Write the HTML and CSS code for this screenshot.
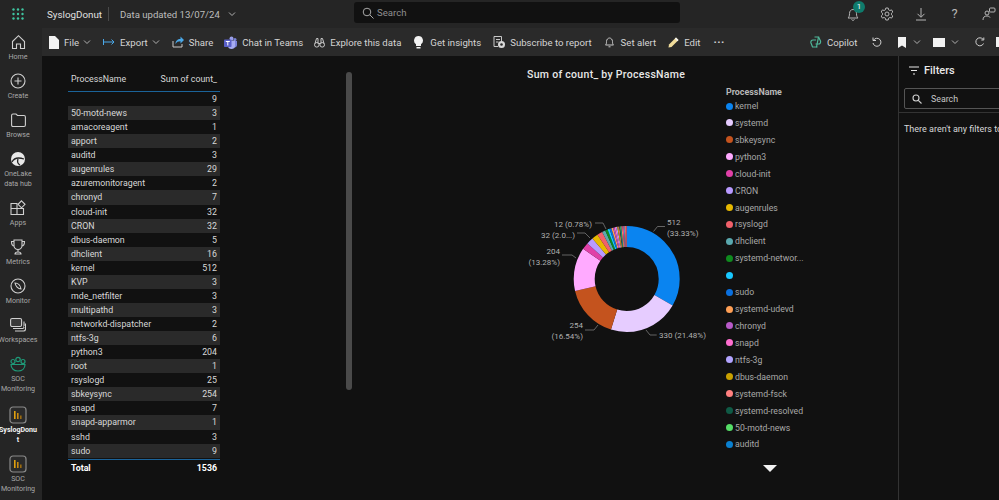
FILE: index.html
```html
<!DOCTYPE html>
<html lang="en">
<head>
<meta charset="utf-8">
<title>SyslogDonut</title>
<link rel="stylesheet" href="styles.css">
</head>
<body>
<svg class="defs" width="0" height="0" aria-hidden="true">
  <defs>
    <symbol id="chev" viewBox="0 0 10 10"><path d="M2 3.5 5 6.5 8 3.5" fill="none" stroke="currentColor" stroke-width="1"/></symbol>
    <symbol id="report" viewBox="0 0 18 18"><rect x="1" y="1" width="16" height="16" rx="3" fill="#2a2a2a" stroke="#8a8a8a" stroke-width="1.2"/><rect x="5" y="5" width="1.6" height="8" fill="#e0a010"/><rect x="8" y="7" width="1.6" height="6" fill="#c98a10"/><rect x="11" y="9.500" width="1.600" height="3.500" fill="#9a6a10"/></symbol>
  </defs>
</svg>
<header class="topbar">
  <div class="waffle"><svg width="12" height="12" viewBox="0 0 12 12" fill="#3fc4a0"><circle cx="1.500" cy="1.500" r="1.200"/><circle cx="6" cy="1.500" r="1.200"/><circle cx="10.500" cy="1.500" r="1.200"/><circle cx="1.500" cy="6" r="1.200"/><circle cx="6" cy="6" r="1.200"/><circle cx="10.500" cy="6" r="1.200"/><circle cx="1.500" cy="10.500" r="1.200"/><circle cx="6" cy="10.500" r="1.200"/><circle cx="10.500" cy="10.500" r="1.200"/></svg></div>
  <span class="brand">SyslogDonut</span>
  <span class="brand-sep"></span>
  <span class="updated">Data updated 13/07/24</span>
  <svg class="chev-top" width="10" height="10"><use href="#chev"/></svg>
  <div class="search">
    <svg width="12" height="12" viewBox="0 0 12 12" fill="none" stroke="#a8a8a8" stroke-width="1"><circle cx="5" cy="5" r="3.800"/><path d="M7.800 7.800 11.500 11.500"/></svg>
    <span>Search</span>
  </div>
  <div class="top-icons">
    <div class="top-icon bell-wrap">
      <svg width="14" height="15" viewBox="0 0 14 15" fill="none" stroke="#b5b5b5" stroke-width="1"><path d="M2 11c1-1 1.500-2 1.500-4.500C3.500 4 5 2.500 7 2.500S10.500 4 10.500 6.500c0 2.500.5 3.500 1.500 4.500Z"/><path d="M5.500 12.500c.5 1 2.500 1 3 0"/></svg>
      <span class="badge">1</span>
    </div>
    <div class="top-icon"><svg width="14" height="14" viewBox="0 0 14 14" fill="none" stroke="#b5b5b5" stroke-width="1"><circle cx="7" cy="7" r="2"/><path d="M5.800 1h2.400l.4 1.800 1.300.7 1.700-.6 1.200 2.100-1.300 1.200v1.600l1.300 1.200-1.200 2.100-1.700-.6-1.300.7L8.200 13H5.800l-.4-1.800-1.300-.7-1.700.6L1.200 9l1.300-1.200V6.200L1.200 5l1.200-2.100 1.700.6 1.300-.7Z"/></svg></div>
    <div class="top-icon"><svg width="12" height="14" viewBox="0 0 12 14" fill="none" stroke="#b5b5b5" stroke-width="1"><path d="M6 1v9M2.500 6.800 6 10.300l3.500-3.500M1 13h10"/></svg></div>
    <div class="top-icon help">?</div>
    <div class="top-icon"><svg width="14" height="14" viewBox="0 0 14 14" fill="none" stroke="#b5b5b5" stroke-width="1"><circle cx="5" cy="6" r="2"/><path d="M1 13c0-3 1.500-4 4-4 1.500 0 2.500.5 3 1.500"/><rect x="7.500" y="1" width="5.500" height="4" rx="1"/></svg></div>
  </div>
</header>
<nav class="toolbar">
  <div class="tool-group">
    <span class="tool tool-file"><svg width="10" height="13" viewBox="0 0 10 13" fill="#f2f2f2"><path d="M0 0h6l4 4v9H0Z"/></svg>File<svg class="tchev" width="10" height="10"><use href="#chev"/></svg></span>
    <span class="tool tool-export"><svg width="12" height="8" viewBox="0 0 12 8" fill="none" stroke="#4aa8e8" stroke-width="1"><path d="M.5 1v6M1 4h10M8.500 1.500 11 4 8.500 6.500"/></svg>Export<svg class="tchev" width="10" height="10"><use href="#chev"/></svg></span>
    <span class="tool tool-share"><svg width="12" height="12" viewBox="0 0 12 12"><path d="M1 5v6h9V8" fill="none" stroke="#c8c8c8"/><path d="M3.500 8c0-3 2-5 5-5V.5L12 4 8.500 7.500V5.300C6 5.300 4.800 6 3.500 8Z" fill="#4aa8e8"/></svg>Share</span>
    <span class="tool tool-teams"><svg width="13" height="13" viewBox="0 0 13 13"><circle cx="7.500" cy="2.500" r="2" fill="#9a9ee8"/><circle cx="11" cy="3.500" r="1.500" fill="#7b83d8"/><path d="M9 5h4v4c0 1.500-1 2.500-2.500 2.500H9Z" fill="#7b83d8"/><path d="M4 4.500h7V10c0 2-1.500 3-3.500 3S4 12 4 10Z" fill="#a6abf0"/><rect x="0" y="3.500" width="7.500" height="7.500" rx=".8" fill="#5a60c8"/><path d="M1.800 5.500h4M3.800 5.500v4" stroke="#fff" stroke-width="1"/></svg>Chat in Teams</span>
    <span class="tool tool-explore"><svg width="11" height="11" viewBox="0 0 11 11" fill="none" stroke="#c8c8c8" stroke-width="1"><circle cx="2.800" cy="7.800" r="2.300"/><circle cx="8.200" cy="7.800" r="2.300"/><path d="M1 6.500 2.500 1.500h1.500v5M10 6.500 8.500 1.500H7v5M4.500 6.500h2"/></svg>Explore this data</span>
    <span class="tool tool-insights"><svg width="9" height="13" viewBox="0 0 9 13" fill="#f2f2f2"><path d="M4.500 0a4.500 4.500 0 0 1 2.500 8.200V10H2V8.200A4.500 4.500 0 0 1 4.500 0Z"/><rect x="2.500" y="11" width="4" height="1.500"/></svg>Get insights</span>
    <span class="tool tool-sub"><svg width="12" height="12" viewBox="0 0 12 12"><path d="M1 .5h7.500v5M1 .5v10h4M3 3.500h4M3 6h2.500" fill="none" stroke="#c8c8c8"/><circle cx="8.500" cy="8.500" r="3.500" fill="#d8d8d8"/><circle cx="8.500" cy="8.500" r="1.300" fill="#2a2a2a"/></svg>Subscribe to report</span>
    <span class="tool tool-alert"><svg width="9" height="11" viewBox="0 0 9 11" fill="none" stroke="#c8c8c8"><path d="M.5 8c.8-.8 1-1.500 1-3.500C1.500 2.500 3 1 4.500 1s3 1.500 3 3.500c0 2 .2 2.700 1 3.500ZM3.500 9.800h2"/></svg>Set alert</span>
    <span class="tool tool-edit"><svg width="11" height="11" viewBox="0 0 11 11"><path d="M8 .5 10.500 3 3.500 10 .5 10.500 1 7.500Z" fill="#f0dc9a"/><path d="M8 .5 10.500 3 9.300 4.200 6.800 1.700Z" fill="#f2f2f2"/></svg>Edit</span>
    <span class="tool tool-more">···</span>
  </div>
  <div class="tool-group tool-right">
    <span class="tool tool-copilot"><svg width="12" height="12" viewBox="0 0 12 12" fill="none" stroke="#4fb79a" stroke-width="1.200"><path d="M4.500 1h4l-2 10h-4l-1.500-4c-.5-1.500.5-3 2-3h3"/><path d="M7.500 11h-1M8.500 1l2 4c.5 1.500-.5 3-2 3h-3"/></svg>Copilot</span>
    <span class="tool tool-undo"><svg width="10" height="10" viewBox="0 0 10 10" fill="none" stroke="#d0d0d0"><path d="M1.500 3.200A4 4 0 1 1 1 6"/><path d="M1 .5v3h3"/></svg></span>
    <span class="tool tool-mark"><svg width="8" height="11" viewBox="0 0 8 11" fill="#f2f2f2"><path d="M0 0h8v11L4 8.500 0 11Z"/></svg><svg class="tchev" width="10" height="10"><use href="#chev"/></svg></span>
    <span class="tool tool-view"><span class="view-rect"></span><svg class="tchev" width="10" height="10"><use href="#chev"/></svg></span>
    <span class="tool-sep"></span>
    <span class="tool tool-refresh"><svg width="10" height="10" viewBox="0 0 10 10" fill="none" stroke="#d0d0d0"><path d="M8.500 6.500A4 4 0 1 1 8 2.300"/><path d="M8.800.5v2.500H6.300"/></svg></span>
    <span class="tool tool-last"><span class="last-rect"></span></span>
  </div>
</nav>
<div class="body-row">
  <aside class="sidebar">
    <a class="side-item"><svg class="side-ic" width="15" height="15" viewBox="0 0 15 15" fill="none" stroke="#d0d0d0" stroke-width="1.100"><path d="M1.500 7 7.500 1.200 13.500 7v7H9.500V9.500h-4V14H1.500Z"/></svg><span>Home</span></a>
    <a class="side-item"><svg class="side-ic" width="16" height="16" viewBox="0 0 16 16" fill="none" stroke="#d0d0d0" stroke-width="1.100"><circle cx="8" cy="8" r="7"/><path d="M8 4.500v7M4.500 8h7"/></svg><span>Create</span></a>
    <a class="side-item"><svg class="side-ic" width="15" height="14" viewBox="0 0 15 14" fill="none" stroke="#d0d0d0" stroke-width="1.100"><path d="M.6 2.500C.6 1.500 1 1 2 1h3l1.500 1.500H13c1 0 1.400.5 1.400 1.500v8c0 1-.4 1.500-1.400 1.500H2c-1 0-1.400-.5-1.400-1.500Z"/></svg><span>Browse</span></a>
    <a class="side-item side-two"><svg class="side-ic" width="16" height="16" viewBox="0 0 16 16"><circle cx="8" cy="8" r="7" fill="#e8e8e8"/><path d="M2 11c2-4 6-5 12-3M8 8c-1 3 0 5 2 6" fill="none" stroke="#242424" stroke-width="1.300"/></svg><span>OneLake<br>data hub</span></a>
    <a class="side-item"><svg class="side-ic" width="16" height="16" viewBox="0 0 16 16" fill="none" stroke="#d0d0d0" stroke-width="1.100"><path d="M1 3.500h6v11H1ZM7 8.500h6.500v6H7ZM1 8.500h6"/><path d="M11.500 .8 15 4.300 11.500 7.800 8 4.300Z"/></svg><span>Apps</span></a>
    <a class="side-item"><svg class="side-ic" width="16" height="16" viewBox="0 0 16 16" fill="none" stroke="#d0d0d0" stroke-width="1.100"><path d="M4 1h8v5.500a4 4 0 0 1-8 0ZM4 2.500H1.500c0 3 1 4.500 3 5M12 2.500h2.500c0 3-1 4.500-3 5M8 10.500V13M5 15c0-1.500 1-2 3-2s3 .5 3 2Z"/></svg><span>Metrics</span></a>
    <a class="side-item"><svg class="side-ic" width="16" height="16" viewBox="0 0 16 16" fill="none" stroke="#d0d0d0" stroke-width="1.100"><circle cx="8" cy="8" r="7"/><path d="M5 5c3 0 5.500 2.500 6 6C8 11 5.500 8 5 5Z"/></svg><span>Monitor</span></a>
    <a class="side-item"><svg class="side-ic" width="16" height="15" viewBox="0 0 16 15" fill="none" stroke="#d0d0d0" stroke-width="1.100"><rect x=".6" y="1" width="11" height="8" rx="1.500" fill="#3a3a3a"/><path d="M3 11h9.500c1 0 1.500-.5 1.500-1.500V4M5 13.500h8.500c1 0 2-1 2-2V6"/></svg><span>Workspaces</span></a>
    <a class="side-item side-two side-soc"><svg class="side-ic" width="16" height="16" viewBox="0 0 16 16" fill="none" stroke="#1f9a78" stroke-width="1.200"><circle cx="8" cy="3.500" r="2.200"/><circle cx="3" cy="5.500" r="2"/><circle cx="13" cy="5.500" r="2"/><path d="M1 8.500h14c0 4-3 6.500-7 6.500S1 12.500 1 8.500Z"/></svg><span>SOC<br>Monitoring</span></a>
    <a class="side-item side-two side-report side-active"><svg class="side-ic" width="18" height="18"><use href="#report"/></svg><span>SyslogDonu<br>t</span></a>
    <a class="side-item side-two side-report"><svg class="side-ic" width="18" height="18"><use href="#report"/></svg><span>SOC<br>Monitoring</span></a>
  </aside>
  <main class="canvas">
    <section class="matrix">
      <div class="m-head"><span>ProcessName</span><span>Sum of count_</span></div>
      <div class="m-rows">
        <div class="m-row"><span></span><span>9</span></div>
        <div class="m-row"><span>50-motd-news</span><span>3</span></div>
        <div class="m-row"><span>amacoreagent</span><span>1</span></div>
        <div class="m-row"><span>apport</span><span>2</span></div>
        <div class="m-row"><span>auditd</span><span>3</span></div>
        <div class="m-row"><span>augenrules</span><span>29</span></div>
        <div class="m-row"><span>azuremonitoragent</span><span>2</span></div>
        <div class="m-row"><span>chronyd</span><span>7</span></div>
        <div class="m-row"><span>cloud-init</span><span>32</span></div>
        <div class="m-row"><span>CRON</span><span>32</span></div>
        <div class="m-row"><span>dbus-daemon</span><span>5</span></div>
        <div class="m-row"><span>dhclient</span><span>16</span></div>
        <div class="m-row"><span>kernel</span><span>512</span></div>
        <div class="m-row"><span>KVP</span><span>3</span></div>
        <div class="m-row"><span>mde_netfilter</span><span>3</span></div>
        <div class="m-row"><span>multipathd</span><span>3</span></div>
        <div class="m-row"><span>networkd-dispatcher</span><span>2</span></div>
        <div class="m-row"><span>ntfs-3g</span><span>6</span></div>
        <div class="m-row"><span>python3</span><span>204</span></div>
        <div class="m-row"><span>root</span><span>1</span></div>
        <div class="m-row"><span>rsyslogd</span><span>25</span></div>
        <div class="m-row"><span>sbkeysync</span><span>254</span></div>
        <div class="m-row"><span>snapd</span><span>7</span></div>
        <div class="m-row"><span>snapd-apparmor</span><span>1</span></div>
        <div class="m-row"><span>sshd</span><span>3</span></div>
        <div class="m-row"><span>sudo</span><span>9</span></div>
      </div>
      <div class="m-total"><span>Total</span><span>1536</span></div>
    </section>
    <div class="scrollbar"></div>
    <section class="chart">
      <h2 class="chart-title">Sum of count_ by ProcessName</h2>
      <svg class="donut" width="363" height="340" viewBox="352 82 363 340">
        <g class="slices" fill="none" stroke-width="21">
          <circle pathLength="1536" stroke="#0a84f0" stroke-dasharray="512 1024" stroke-dashoffset="0"/>
          <circle pathLength="1536" stroke="#e6ccff" stroke-dasharray="330 1206" stroke-dashoffset="-512"/>
          <circle pathLength="1536" stroke="#c4531e" stroke-dasharray="254 1282" stroke-dashoffset="-842"/>
          <circle pathLength="1536" stroke="#ffaaff" stroke-dasharray="204 1332" stroke-dashoffset="-1096"/>
          <circle pathLength="1536" stroke="#e040a8" stroke-dasharray="32 1504" stroke-dashoffset="-1300"/>
          <circle pathLength="1536" stroke="#b99aff" stroke-dasharray="32 1504" stroke-dashoffset="-1332"/>
          <circle pathLength="1536" stroke="#e6b800" stroke-dasharray="29 1507" stroke-dashoffset="-1364"/>
          <circle pathLength="1536" stroke="#f0606a" stroke-dasharray="25 1511" stroke-dashoffset="-1393"/>
          <circle pathLength="1536" stroke="#5aa8ae" stroke-dasharray="16 1520" stroke-dashoffset="-1418"/>
          <circle pathLength="1536" stroke="#0f8a1e" stroke-dasharray="12 1524" stroke-dashoffset="-1434"/>
          <circle pathLength="1536" stroke="#18c8ff" stroke-dasharray="9 1527" stroke-dashoffset="-1446"/>
          <circle pathLength="1536" stroke="#0a70e0" stroke-dasharray="9 1527" stroke-dashoffset="-1455"/>
          <circle pathLength="1536" stroke="#ff9f55" stroke-dasharray="8 1528" stroke-dashoffset="-1464"/>
          <circle pathLength="1536" stroke="#b85ac8" stroke-dasharray="7 1529" stroke-dashoffset="-1472"/>
          <circle pathLength="1536" stroke="#ff6ed0" stroke-dasharray="7 1529" stroke-dashoffset="-1479"/>
          <circle pathLength="1536" stroke="#b3a4ff" stroke-dasharray="6 1530" stroke-dashoffset="-1486"/>
          <circle pathLength="1536" stroke="#c9a000" stroke-dasharray="5 1531" stroke-dashoffset="-1492"/>
          <circle pathLength="1536" stroke="#ff8080" stroke-dasharray="4 1532" stroke-dashoffset="-1497"/>
          <circle pathLength="1536" stroke="#0f5a45" stroke-dasharray="4 1532" stroke-dashoffset="-1501"/>
          <circle pathLength="1536" stroke="#55dd66" stroke-dasharray="3 1533" stroke-dashoffset="-1505"/>
          <circle pathLength="1536" stroke="#0a80d0" stroke-dasharray="3 1533" stroke-dashoffset="-1508"/>
          <circle pathLength="1536" stroke="#ff9f55" stroke-dasharray="5 1531" stroke-dashoffset="-1511"/>
          <circle pathLength="1536" stroke="#e040a8" stroke-dasharray="6 1530" stroke-dashoffset="-1516"/>
          <circle pathLength="1536" stroke="#5aa8ae" stroke-dasharray="5 1531" stroke-dashoffset="-1522"/>
          <circle pathLength="1536" stroke="#f0606a" stroke-dasharray="9 1527" stroke-dashoffset="-1527"/>
        </g>
        <g class="leaders" fill="none" stroke="#7a7a7a" stroke-width=".8">
          <path d="M653.500 231.500 657.500 226.500H665"/>
          <path d="M646 330 650 335H656.700"/>
          <path d="M598 325 594 330H585"/>
          <path d="M576 258 572 255H562"/>
          <path d="M590 238 585 233H577"/>
          <path d="M606 229 603 223H595"/>
        </g>
        <g class="labels">
          <text x="667" y="225">512</text>
          <text x="667" y="236">(33.33%)</text>
          <text x="659" y="338">330 (21.48%)</text>
          <text x="583" y="328" text-anchor="end">254</text>
          <text x="583" y="339" text-anchor="end">(16.54%)</text>
          <text x="560" y="254" text-anchor="end">204</text>
          <text x="560" y="265" text-anchor="end">(13.28%)</text>
          <text x="575" y="238" text-anchor="end">32 (2.0...)</text>
          <text x="592" y="227" text-anchor="end">12 (0.78%)</text>
        </g>
      </svg>
    </section>
    <section class="legend">
      <h3 class="legend-title">ProcessName</h3>
      <ul class="legend-list">
        <li><i class="c1"></i>kernel</li>
        <li><i class="c2"></i>systemd</li>
        <li><i class="c3"></i>sbkeysync</li>
        <li><i class="c4"></i>python3</li>
        <li><i class="c5"></i>cloud-init</li>
        <li><i class="c6"></i>CRON</li>
        <li><i class="c7"></i>augenrules</li>
        <li><i class="c8"></i>rsyslogd</li>
        <li><i class="c9"></i>dhclient</li>
        <li><i class="c10"></i>systemd-networ...</li>
        <li><i class="c11"></i></li>
        <li><i class="c12"></i>sudo</li>
        <li><i class="c13"></i>systemd-udevd</li>
        <li><i class="c14"></i>chronyd</li>
        <li><i class="c15"></i>snapd</li>
        <li><i class="c16"></i>ntfs-3g</li>
        <li><i class="c17"></i>dbus-daemon</li>
        <li><i class="c18"></i>systemd-fsck</li>
        <li><i class="c19"></i>systemd-resolved</li>
        <li><i class="c20"></i>50-motd-news</li>
        <li><i class="c21"></i>auditd</li>
      </ul>
      <div class="legend-more"></div>
    </section>
    <aside class="filters">
      <div class="f-head"><svg width="12" height="9" viewBox="0 0 12 9" fill="none" stroke="#e8e8e8" stroke-width="1.200"><path d="M1 1h10M3 4.500h6M5 8h2"/></svg><span>Filters</span></div>
      <div class="f-search"><svg width="10" height="10" viewBox="0 0 10 10" fill="none" stroke="#d0d0d0" stroke-width="1.100"><circle cx="4" cy="4" r="3"/><path d="M6.300 6.300 9.500 9.500"/></svg><span>Search</span></div>
      <p class="f-empty">There aren't any filters to display</p>
    </aside>
  </main>
</div>
</body>
</html>
```
FILE: styles.css
```css
* { box-sizing: border-box; }
html, body { margin: 0; height: 100%; overflow: hidden; }
body { background: #111; color: #d8d8d8; font-family: Roboto, "Open Sans", sans-serif; font-size: 8.800px; width: 999px; height: 500px; }
.defs { position: absolute; }
.topbar { display: flex; align-items: center; height: 28px; background: #252525; }
.waffle { width: 42px; display: flex; justify-content: center; padding-right: 6px; }
.brand { margin-left: 5px; font-size: 9.800px; color: #e0e0e0; width: 56px; white-space: nowrap; }
.brand-sep { width: 1px; height: 14px; background: #4a4a4a; margin-left: 5px; }
.updated { margin-left: 11px; font-size: 9.600px; color: #bdbdbd; width: 102px; white-space: nowrap; }
.chev-top { margin-left: 5px; color: #b0b0b0; }
.search { margin-left: 117px; width: 326px; height: 21px; margin-top: -3px; background: #111; border-radius: 3px; display: flex; align-items: center; gap: 3px; padding-left: 8px; color: #8f8f8f; font-size: 9.600px; }
.top-icons { margin-left: 165px; display: flex; align-items: center; gap: 19px; color: #b5b5b5; }
.top-icon { width: 15px; display: flex; justify-content: center; position: relative; }
.help { font-size: 13px; line-height: 14px; }
.badge { position: absolute; left: 8px; top: -6px; width: 12px; height: 12px; border-radius: 50%; background: #0f7b6c; color: #fff; font-size: 8px; line-height: 12px; text-align: center; }
.toolbar { display: flex; justify-content: space-between; height: 28px; background: #2a2a2a; padding-left: 49px; overflow: hidden; }
.tool-group { display: flex; align-items: center; }
.tool-right { width: 189px; flex: none; }
.tool { display: inline-flex; align-items: center; gap: 5px; font-size: 9.600px; color: #d4d4d4; white-space: nowrap; }
.tchev { color: #b0b0b0; margin-left: -2px; }
.tool-file { margin-right: 11px; }
.tool-export { margin-right: 11px; }
.tool-share { margin-right: 11px; }
.tool-teams { margin-right: 11px; }
.tool-explore { margin-right: 13px; }
.tool-insights { margin-right: 12px; gap: 7px; }
.tool-sub { margin-right: 13px; }
.tool-alert { margin-right: 12px; gap: 7px; }
.tool-edit { margin-right: 13px; }
.tool-more { font-size: 11px; font-weight: 700; letter-spacing: .5px; }
.tool-copilot { margin-right: 15px; }
.tool-undo { margin-right: 16px; }
.tool-mark { margin-right: 11px; gap: 8px; }
.tool-view { margin-right: 6px; gap: 7px; }
.view-rect { width: 12px; height: 9px; background: #f2f2f2; }
.tool-sep { width: 1px; height: 20px; background: #707070; margin-right: 9px; }
.tool-refresh { margin-right: 11px; }
.last-rect { width: 8px; height: 10px; background: #f2f2f2; }
.body-row { display: flex; height: 444px; }
.sidebar { width: 42px; flex: none; margin-top: -28px; background: #252525; padding-top: 6px; position: relative; display: flex; flex-direction: column; gap: 11px; overflow: hidden; height: 472px; }
.side-item { width: 36px; display: flex; flex-direction: column; align-items: center; text-align: center; font-size: 7.100px; line-height: 10px; color: #a8a8a8; height: 28px; }
.side-ic { height: 16px; margin-bottom: 2px; flex: none; }
.side-two { height: 38px; }
.side-soc { margin-bottom: 2px; }
.side-report .side-ic { height: 18px; margin-top: -1px; margin-bottom: 1px; }
.side-active { color: #f2f2f2; font-weight: 700; height: 38px; }
.canvas { flex: 1; display: flex; background: #111; position: relative; min-width: 0; }
.matrix { width: 152px; margin-left: 26px; flex: none; }
.m-head { display: flex; justify-content: space-between; align-items: center; height: 36px; padding: 11px 3px 0; border-bottom: 1px solid #1b6399; color: #d8d8d8; }
.m-rows { display: flex; flex-direction: column; }
.m-row { display: flex; justify-content: space-between; align-items: center; height: 14.070px; padding: 0 3px; }
.m-row:nth-child(even) { background: #2a2a2a; }
.m-total { display: flex; justify-content: space-between; align-items: center; height: 17px; margin-top: 1px; padding: 0 3px; border-top: 1px solid #1b6399; color: #fff; font-weight: 700; }
.scrollbar { width: 6px; height: 318px; margin: 16px 0 0 126px; background: #4a4a4a; border-radius: 3px; flex: none; }
.chart { width: 363px; flex: none; }
.chart-title { margin: 0; height: 26px; padding-top: 12px; padding-left: 175px; font-size: 10.500px; line-height: 14px; font-weight: 500; letter-spacing: .3px; color: #e8e8e8; white-space: nowrap; }
.donut { display: block; }
.slices circle { cx: 626.700px; cy: 279px; r: 42.500px; transform: rotate(-90deg); transform-origin: 626.700px 279px; }
.labels text { font-size: 8px; fill: #b0b0b0; }
.legend { width: 183px; flex: none; padding: 30px 0 0 11px; position: relative; }
.legend-title { margin: 0; font-size: 8.900px; line-height: 12px; font-weight: 700; color: #b8b8b8; }
.legend-list { list-style: none; margin: 2px 0 0; padding: 0; display: flex; flex-direction: column; gap: 4.930px; }
.legend-list li { display: flex; align-items: center; gap: 2px; height: 12px; font-size: 8.700px; color: #a8a8a8; }
.legend-list i { width: 7px; height: 7px; border-radius: 50%; flex: none; }
.c1 { background: #0a84f0; } .c2 { background: #e6ccff; } .c3 { background: #c4531e; }
.c4 { background: #ffaaff; } .c5 { background: #e040a8; } .c6 { background: #b99aff; }
.c7 { background: #e6b800; } .c8 { background: #f0606a; } .c9 { background: #5aa8ae; }
.c10 { background: #0f8a1e; } .c11 { background: #18c8ff; } .c12 { background: #0a70e0; }
.c13 { background: #ff9f55; } .c14 { background: #b85ac8; } .c15 { background: #ff6ed0; }
.c16 { background: #b3a4ff; } .c17 { background: #c9a000; } .c18 { background: #ff8080; }
.c19 { background: #0f5a45; } .c20 { background: #55dd66; } .c21 { background: #0a80d0; }
.legend-more { width: 0; height: 0; margin: 15px 0 0 37px; border-left: 7px solid transparent; border-right: 7px solid transparent; border-top: 7px solid #f2f2f2; }
.filters { flex: 1; min-width: 0; border-left: 1px solid #333; overflow: hidden; white-space: nowrap; }
.f-head { display: flex; align-items: center; gap: 4px; height: 32px; padding: 0 0 4px 9px; font-size: 11px; font-weight: 500; color: #e8e8e8; }
.f-search { display: flex; align-items: center; gap: 9px; margin-left: 5px; width: 110px; height: 21px; border: 1px solid #555; border-radius: 2px; padding-left: 7px; color: #c8c8c8; }
.f-empty { margin: 3px 0 0; padding: 11px 0 0 5px; border-top: 1px solid #333; color: #d8d8d8; font-size: 9px; }
```
